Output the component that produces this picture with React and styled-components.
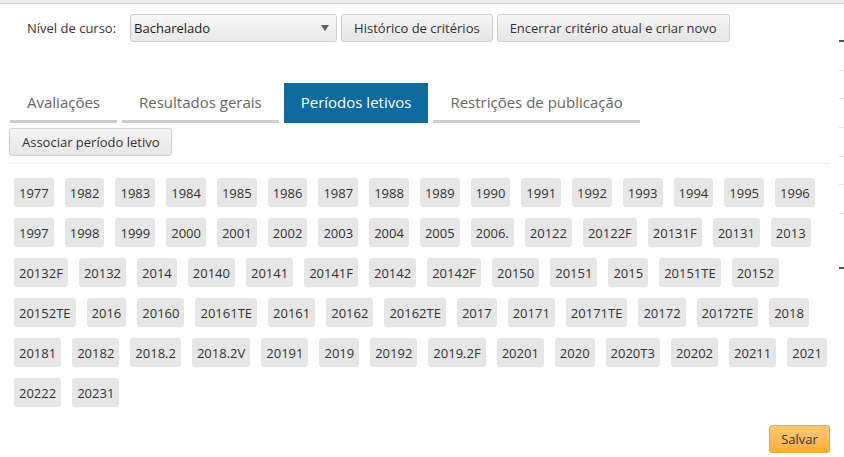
import React from "react";
import styled, { createGlobalStyle } from "styled-components";

const periodos = [
  "1977", "1982", "1983", "1984", "1985", "1986", "1987", "1988", "1989", "1990",
  "1991", "1992", "1993", "1994", "1995", "1996", "1997", "1998", "1999", "2000",
  "2001", "2002", "2003", "2004", "2005", "2006.", "20122", "20122F", "20131F",
  "20131", "2013", "20132F", "20132", "2014", "20140", "20141", "20141F", "20142",
  "20142F", "20150", "20151", "2015", "20151TE", "20152", "20152TE", "2016",
  "20160", "20161TE", "20161", "20162", "20162TE", "2017", "20171", "20171TE",
  "20172", "20172TE", "2018", "20181", "20182", "2018.2", "2018.2V", "20191",
  "2019", "20192", "2019.2F", "20201", "2020", "2020T3", "20202", "20211", "2021",
  "20222", "20231",
];

const abas = ["Avaliações", "Resultados gerais", "Períodos letivos", "Restrições de publicação"];

// marcas do menu lateral cortado na borda direita
const marcas = [
  { top: 39, ativo: true },
  { top: 69 },
  { top: 97 },
  { top: 126 },
  { top: 155 },
  { top: 183 },
  { top: 212 },
  { top: 266, ativo: true },
];

function App() {
  return (
    <>
      <GlobalStyle />
      <TopBar />
      <Page>
        <Content>
          <Header>
            <Label>Nível de curso:</Label>
            <Select>
              <span>Bacharelado</span>
              <Caret />
            </Select>
            <Button>Histórico de critérios</Button>
            <Button>Encerrar critério atual e criar novo</Button>
          </Header>

          <Tabs>
            {abas.map((aba) => (
              <Tab key={aba} active={aba === "Períodos letivos"}>
                {aba}
              </Tab>
            ))}
          </Tabs>

          <Toolbar>
            <Button>Associar período letivo</Button>
          </Toolbar>

          <ChipList>
            {periodos.map((p) => (
              <Chip key={p}>{p}</Chip>
            ))}
          </ChipList>

          <Footer>
            <SaveButton>Salvar</SaveButton>
          </Footer>
        </Content>
        <SideStrip>
          {marcas.map((m) => (
            <Mark key={m.top} style={{ top: m.top - 3 }} active={m.ativo} />
          ))}
        </SideStrip>
      </Page>
    </>
  );
}

const GlobalStyle = createGlobalStyle`
  body {
    margin: 0;
    background: #fff;
    font-family: "Open Sans", "Noto Sans", sans-serif;
    color: #333;
    overflow: hidden;
  }
`;

const TopBar = styled.div`
  height: 3px;
  background-color: #eeeeee;
  border-bottom: 1px solid #d4d4d4;
`;

const Page = styled.div`
  display: flex;
  height: 453px;
`;

const Content = styled.div`
  flex: 1;
  display: flex;
  flex-direction: column;
  padding: 0 9px 0 9px;
`;

const Header = styled.div`
  display: flex;
  align-items: center;
  height: 28px;
  margin-top: 10px;
  padding-left: 18px;
`;

const Label = styled.span`
  font-size: 13px;
  color: #333;
  margin-right: 14px;
`;

const Select = styled.div`
  box-sizing: border-box;
  width: 207px;
  height: 28px;
  display: flex;
  align-items: center;
  justify-content: space-between;
  padding: 0 7px 0 3px;
  font-size: 13px;
  color: #222;
  background: linear-gradient(#f7f7f7, #e8e8e8);
  border: 1px solid #cfcfcf;
  border-radius: 3px;
  margin-right: 4px;
`;

const Caret = styled.span`
  width: 0;
  height: 0;
  border-left: 4px solid transparent;
  border-right: 4px solid transparent;
  border-top: 6px solid #5f5f5f;
`;

const Button = styled.button`
  box-sizing: border-box;
  height: 28px;
  padding: 0 12px;
  margin-right: 4px;
  font-family: inherit;
  font-size: 13px;
  color: #333;
  background: linear-gradient(#f5f5f5, #e6e6e6);
  border: 1px solid #d0d0d0;
  border-radius: 3px;
  cursor: pointer;
`;

const Tabs = styled.div`
  display: flex;
  margin-top: 41px;
  margin-left: 1px;
  gap: 5px;
`;

const Tab = styled.div`
  box-sizing: border-box;
  height: 40px;
  display: flex;
  align-items: center;
  padding: 0 17px;
  font-size: 15px;
  color: ${(p) => (p.active ? "#fff" : "#666")};
  background-color: ${(p) => (p.active ? "#0f6a9f" : "transparent")};
  border-bottom: 3px solid ${(p) => (p.active ? "#0f6a9f" : "#cccccc")};
`;

const Toolbar = styled.div`
  margin-top: 5px;
  padding-bottom: 7px;
  border-bottom: 1px solid #eeeeee;
`;

const ChipList = styled.div`
  display: flex;
  flex-wrap: wrap;
  gap: 11px 11px;
  padding: 14px 0 0 5px;
`;

const Chip = styled.span`
  box-sizing: border-box;
  height: 29px;
  display: inline-flex;
  align-items: center;
  padding: 0 5px;
  font-size: 13px;
  color: #333;
  background-color: #e6e6e6;
  border-radius: 3px;
`;

const Footer = styled.div`
  display: flex;
  justify-content: flex-end;
  margin-top: auto;
  padding-bottom: 4px;
`;

const SaveButton = styled.button`
  box-sizing: border-box;
  width: 61px;
  height: 28px;
  font-family: inherit;
  font-size: 13px;
  color: #333;
  background: linear-gradient(#ffc979, #ffad3b);
  border: 1px solid #f2a63a;
  border-radius: 3px;
  cursor: pointer;
`;

const SideStrip = styled.div`
  position: relative;
  width: 5px;
`;

const Mark = styled.div`
  position: absolute;
  left: 0;
  right: 0;
  height: ${(p) => (p.active ? 2 : 1)}px;
  background-color: ${(p) => (p.active ? "#2c5f8a" : "#e2e2e2")};
`;

export default App;
